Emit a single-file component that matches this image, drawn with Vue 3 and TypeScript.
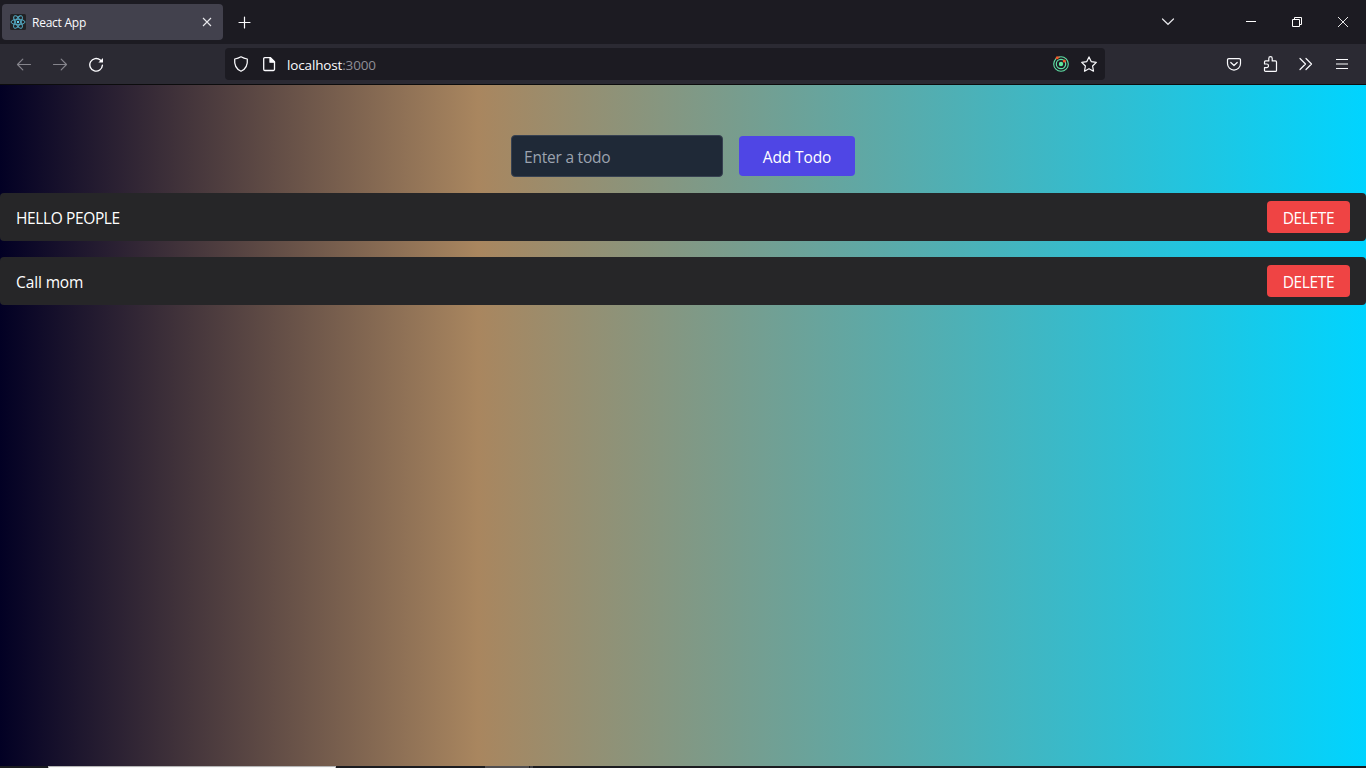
<script setup lang="ts">
import { ref } from 'vue'

interface Todo {
  id: number
  text: string
}

const draft = ref('')
const todos = ref<Todo[]>([
  { id: 1, text: 'HELLO PEOPLE' },
  { id: 2, text: 'Call mom' },
])

function addTodo() {
  const text = draft.value.trim()
  if (!text) return
  todos.value.push({ id: Date.now(), text })
  draft.value = ''
}

function removeTodo(id: number) {
  todos.value = todos.value.filter((t) => t.id !== id)
}
</script>

<template>
  <div class="window">
    <header class="tabbar">
      <div class="tab">
        <svg class="favicon" width="16" height="16" viewBox="0 0 16 16" fill="none" stroke="#55adc6">
          <rect width="16" height="16" rx="1.5" fill="#222224" stroke="none" />
          <g stroke-width="0.95">
            <ellipse cx="8" cy="8" rx="7" ry="2.7" />
            <ellipse cx="8" cy="8" rx="7" ry="2.7" transform="rotate(60 8 8)" />
            <ellipse cx="8" cy="8" rx="7" ry="2.7" transform="rotate(120 8 8)" />
          </g>
          <circle cx="8" cy="8" r="1.2" fill="#61dafb" stroke="none" />
        </svg>
        <span class="tab-title">React App</span>
        <svg class="tab-close" width="16" height="16" viewBox="0 0 16 16" stroke="#e8e8ec" stroke-width="1.1">
          <path d="M4 4l8 8M12 4l-8 8" />
        </svg>
      </div>
      <svg class="new-tab" width="16" height="16" viewBox="0 0 16 16" stroke="#fbfbfe" stroke-width="1.2" stroke-linecap="round">
        <path d="M8.5 3v11M3 8.5h11" />
      </svg>
      <div class="window-controls">
        <svg width="46" height="44" viewBox="0 0 46 44" fill="none" stroke="#e4e4e8" stroke-width="1.2" stroke-linecap="round">
          <path d="M17.5 19l5.5 5.3 5.5-5.3" />
        </svg>
        <svg class="minimize" width="46" height="44" viewBox="0 0 46 44" stroke="#fff">
          <path d="M18 21.5h10" />
        </svg>
        <svg width="46" height="44" viewBox="0 0 46 44" fill="none" stroke="#fff">
          <path d="M18.500 19.500h7v7h-7zM20.500 19.500v-2h7v7h-2" />
        </svg>
        <svg width="46" height="44" viewBox="0 0 46 44" stroke="#fff" stroke-width="0.9">
          <path d="M18 17l10 10M28 17l-10 10" />
        </svg>
      </div>
    </header>

    <nav class="toolbar">
      <div class="nav-buttons">
        <svg width="16" height="16" viewBox="0 0 16 16" fill="none" stroke="#85848c" stroke-width="1.2" stroke-linecap="round" stroke-linejoin="round">
          <path d="M14.5 8.5h-13M6.8 3.2L1.5 8.5l5.3 5.3" />
        </svg>
        <svg width="16" height="16" viewBox="0 0 16 16" fill="none" stroke="#85848c" stroke-width="1.2" stroke-linecap="round" stroke-linejoin="round">
          <path d="M1.5 8.5h13M9.2 3.2l5.3 5.3-5.3 5.3" />
        </svg>
        <svg width="16" height="16" viewBox="0 0 16 16" fill="none" stroke="#fbfbfe" stroke-width="1.4" stroke-linecap="round">
          <path d="M14.4 9.2A6.3 6.3 0 1 1 12.3 4.1l1 1" />
          <path d="M15 2v4.6h-4.6z" fill="#fbfbfe" stroke="none" />
        </svg>
      </div>

      <div class="urlbar">
        <svg width="16" height="16" viewBox="0 0 16 16" fill="none" stroke="#fbfbfe" stroke-width="1.25" stroke-linejoin="round">
          <path d="M8 .8C10 2 12.2 2.7 14.3 3c.5 5.200-1.200 10-6.300 12.300C2.900 13 1.200 8.200 1.700 3 3.800 2.700 6 2 8 .8z" />
        </svg>
        <svg class="page-icon" width="16" height="16" viewBox="0 0 16 16" fill="none" stroke="#fbfbfe" stroke-width="1.3" stroke-linejoin="round">
          <path d="M3.700 1.700h5.800l4 4v7.600a1.200 1.200 0 0 1-1.200 1.200H3.900a1.200 1.200 0 0 1-1.200-1.200V2.700a1 1 0 0 1 1-1z" />
          <path d="M9 1.700v4.500h4.500z" fill="#fbfbfe" />
        </svg>
        <span class="address">localhost<span class="port">:3000</span></span>
        <svg class="radar" width="16" height="16" viewBox="0 0 16 16" fill="none" stroke="#5fe0a5">
          <circle cx="8" cy="8" r="7.300" stroke-width="1.100" />
          <circle cx="8" cy="8" r="4.700" stroke-width="1.200" />
          <circle cx="8" cy="8" r="2.200" fill="#5fe89d" stroke="none" />
          <path d="M2.600 2.900A7.300 7.300 0 0 1 7 .8" stroke="#b87a48" stroke-width="1.200" />
          <circle cx="4.200" cy="1.700" r="1.500" fill="#f15a2b" stroke="none" />
          <circle cx="11.300" cy="5" r="1.500" fill="#f15a2b" stroke="none" />
        </svg>
        <svg class="star" width="16" height="16" viewBox="0 0 16 16" fill="none" stroke="#fbfbfe" stroke-width="1.200" stroke-linejoin="round">
          <path d="M8 .9l2.200 4.700 5.100.700-3.700 3.700.900 5.200L8 12.700l-4.500 2.500.900-5.200L.7 6.300l5.100-.700z" />
        </svg>
      </div>

      <div class="toolbar-actions">
        <svg width="16" height="16" viewBox="0 0 16 16" fill="none" stroke="#fbfbfe" stroke-width="1.200" stroke-linecap="round" stroke-linejoin="round">
          <path d="M2.800 2.600h10.400a1.300 1.300 0 0 1 1.300 1.300v3.700a6.500 6.500 0 0 1-13 0V3.900a1.300 1.300 0 0 1 1.300-1.300zM4.800 6.500L8 9.500l3.200-3" />
        </svg>
        <svg width="16" height="16" viewBox="0 0 16 16" fill="none" stroke="#fbfbfe" stroke-width="1.200" stroke-linejoin="round">
          <path d="M2.500 8V5.900a1 1 0 0 1 1-1h3.300V2.400a1.700 1.700 0 0 1 3.400 0v2.500h3.300a1 1 0 0 1 1 1v8.500a1 1 0 0 1-1 1h-10a1 1 0 0 1-1-1v-2.800h2.200a1.800 1.800 0 0 0 0-3.600z" />
        </svg>
        <svg width="16" height="16" viewBox="0 0 16 16" fill="none" stroke="#fbfbfe" stroke-width="1.200" stroke-linecap="round" stroke-linejoin="round">
          <path d="M2 2.500L7.500 8 2 13.500M8 2.500L13.500 8 8 13.500" />
        </svg>
        <svg width="16" height="16" viewBox="0 0 16 16" stroke="#fbfbfe" stroke-width="1.200">
          <path d="M2 3.500h12M2 8h12M2 12.500h12" />
        </svg>
      </div>
    </nav>

    <main class="page">
      <form class="todo-form" @submit.prevent="addTodo">
        <input v-model="draft" type="text" placeholder="Enter a todo" />
        <button class="add" type="submit">Add Todo</button>
      </form>
      <ul class="todos">
        <li v-for="todo in todos" :key="todo.id">
          <span class="label" :class="{ caps: todo.text === todo.text.toUpperCase() }">{{ todo.text }}</span>
          <button class="delete" @click="removeTodo(todo.id)">DELETE</button>
        </li>
      </ul>
    </main>

    <footer class="taskbar">
      <div class="task-search"></div>
      <div class="task-active"></div>
      <div class="task-edge"></div>
    </footer>
  </div>
</template>

<style>
body {
  background: #1c1b22;
  overflow: hidden;
}
</style>

<style scoped>
.window {
  width: 1366px;
  height: 768px;
  display: flex;
  flex-direction: column;
  overflow: hidden;
  font-family: 'Open Sans', 'Noto Sans', sans-serif;
  color: #fff;
}
.window * {
  box-sizing: border-box;
}
svg {
  display: block;
  flex: none;
}
.tabbar {
  flex: 0 0 44px;
  display: flex;
  align-items: center;
  padding-left: 2px;
  background: #1c1b22;
}
.tab {
  display: flex;
  align-items: center;
  width: 221px;
  height: 36px;
  padding: 0 8px;
  border-radius: 4px;
  background: #42414d;
}
.tab-title {
  margin-left: 6px;
  padding-top: 1px;
  font-size: 12px;
  letter-spacing: -0.25px;
  color: #fbfbfe;
}
.tab-close {
  margin-left: auto;
}
.new-tab {
  margin-left: 13px;
}
.window-controls {
  display: flex;
  margin-left: auto;
}
.minimize {
  margin-left: 37px;
}
.toolbar {
  flex: 0 0 41px;
  display: flex;
  align-items: center;
  padding-bottom: 1px;
  background: #2b2a33;
  border-bottom: 1px solid #0c0c0d;
}
.nav-buttons {
  display: flex;
  gap: 20px;
  width: 225px;
  padding-left: 16px;
}
.urlbar {
  display: flex;
  align-items: center;
  width: 880px;
  height: 32px;
  padding: 0 8px;
  border-radius: 4px;
  background: #1c1b22;
}
.page-icon {
  margin-left: 12px;
}
.address {
  margin-left: 10px;
  padding-top: 2px;
  font-size: 13.5px;
  letter-spacing: -0.15px;
  color: #fbfbfe;
}
.port {
  color: #8f8e96;
}
.radar {
  margin-left: auto;
}
.star {
  margin-left: 12px;
}
.toolbar-actions {
  display: flex;
  gap: 20px;
  margin-left: auto;
  padding-right: 16px;
}
.page {
  flex: 1;
  background: linear-gradient(90deg, #020024 0%, #a9865f 35%, #00d4ff 100%);
}
.todo-form {
  display: flex;
  align-items: center;
  justify-content: center;
  gap: 16px;
  padding: 50px 0 16px;
}
input {
  width: 212px;
  height: 42px;
  padding: 2px 12px 0;
  border: 1px solid #374151;
  border-radius: 4px;
  background: #1f2937;
  color: #fff;
  font: 15.5px 'Open Sans', 'Noto Sans', sans-serif;
  letter-spacing: -0.22px;
  outline: none;
}
input::placeholder {
  color: #9ca3af;
  opacity: 1;
}
button {
  display: flex;
  align-items: center;
  justify-content: center;
  border: 0;
  border-radius: 4px;
  color: #fff;
  font: 15.5px 'Open Sans', 'Noto Sans', sans-serif;
  white-space: nowrap;
}
.add {
  width: 116px;
  height: 40px;
  padding: 2px 0 0;
  letter-spacing: -0.12px;
  background: #4f46e5;
}
.todos {
  display: flex;
  flex-direction: column;
  gap: 16px;
  margin: 0;
  padding: 0;
  list-style: none;
}
li {
  display: flex;
  align-items: center;
  justify-content: space-between;
  height: 48px;
  padding: 0 16px;
  border-radius: 4px;
  background: #262628;
  font-size: 15.5px;
}
.label {
  padding-top: 2px;
  letter-spacing: -0.12px;
}
.caps {
  letter-spacing: -0.38px;
}
.delete {
  width: 83px;
  height: 32px;
  padding: 2px 0 0;
  letter-spacing: -0.35px;
  background: #ef4444;
}
.taskbar {
  flex: 0 0 2px;
  display: flex;
  padding-left: 48px;
  background: #1b1c20;
}
.task-search {
  width: 288px;
  border: 1px solid #b5b5b5;
  border-bottom: 0;
  background: #f8f8f8;
}
.task-active {
  width: 44px;
  margin-left: 149px;
  background: #504e50;
}
.task-edge {
  width: 3px;
  margin-left: 1px;
  background: #403f42;
}
</style>
